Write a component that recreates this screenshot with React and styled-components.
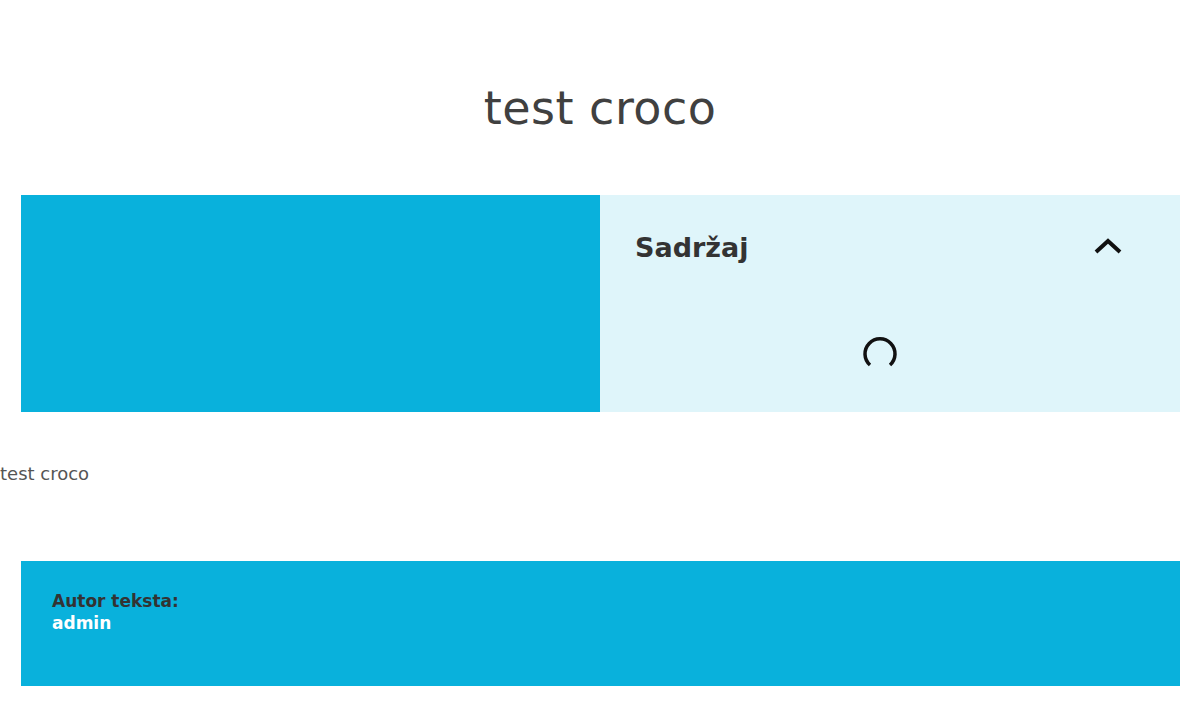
import React from 'react';
import styled, { createGlobalStyle } from 'styled-components';

const GlobalStyle = createGlobalStyle`
  body {
    margin: 0;
    background: #ffffff;
    font-family: "DejaVu Sans", "Open Sans", sans-serif;
    color: #333333;
  }
`;

const Page = styled.div`
  width: 1200px;
`;

const Title = styled.h1`
  margin: 0 0 57px;
  padding-top: 78px;
  text-align: center;
  font-weight: 400;
  font-size: 46px;
  line-height: 60px;
  color: #404040;
  letter-spacing: 0.5px;
`;

const Hero = styled.div`
  display: grid;
  grid-template-columns: 579px 580px;
  margin: 0 20px 0 21px;
  height: 217px;
`;

const HeroImage = styled.div`
  background: #09b1dc;
`;

const Toc = styled.div`
  background: #dff5fa;
  padding: 30px 35px;
  display: flex;
  flex-direction: column;
`;

const TocHeader = styled.div`
  display: flex;
  align-items: center;
  justify-content: space-between;
  height: 44px;
`;

const TocTitle = styled.h2`
  margin: 0;
  font-size: 27px;
  font-weight: 700;
  color: #333333;
`;

const Chevron = styled.svg`
  width: 30px;
  height: 20px;
  margin-right: 22px;
`;

const SpinnerWrap = styled.div`
  display: flex;
  justify-content: center;
  margin: 67px 20px 0 0;
`;

const Spinner = styled.svg`
  width: 38px;
  height: 38px;
`;

const Body = styled.p`
  margin: 50px 0 0;
  font-size: 18px;
  line-height: 24px;
  color: #555555;
`;

const Author = styled.div`
  margin: 75px 20px 0 21px;
  height: 125px;
  background: #09b1dc;
  padding: 29px 31px;
  box-sizing: border-box;
  font-size: 17px;
  font-weight: 700;
  line-height: 22px;
`;

const AuthorLabel = styled.div`
  color: #333333;
`;

const AuthorName = styled.div`
  color: #ffffff;
`;

export default function App() {
  return (
    <Page>
      <GlobalStyle />
      <Title>test croco</Title>
      <Hero>
        <HeroImage />
        <Toc>
          <TocHeader>
            <TocTitle>Sadržaj</TocTitle>
            <Chevron viewBox="0 0 30 20">
              <path d="M3 15 L15 4 L27 15" fill="none" stroke="#111" strokeWidth="4" />
            </Chevron>
          </TocHeader>
          <SpinnerWrap>
            <Spinner viewBox="0 0 38 38">
              <path
                d="M9 29 A15 15 0 1 1 29 29"
                fill="none"
                stroke="#111"
                strokeWidth="3.5"
              />
            </Spinner>
          </SpinnerWrap>
        </Toc>
      </Hero>
      <Body>test croco</Body>
      <Author>
        <AuthorLabel>Autor teksta:</AuthorLabel>
        <AuthorName>admin</AuthorName>
      </Author>
    </Page>
  );
}
